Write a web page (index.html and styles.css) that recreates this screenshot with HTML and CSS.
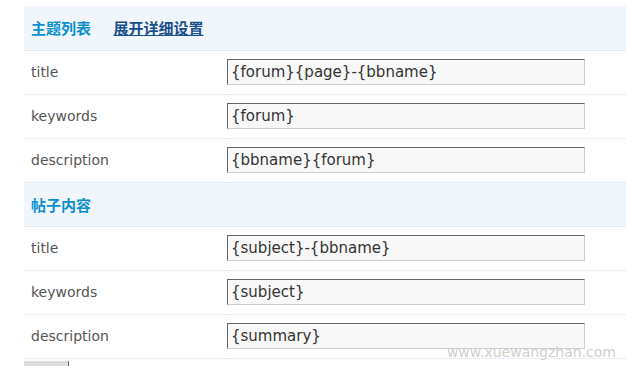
FILE: index.html
```html
<html>
    <head>
        <title>SEO设置</title>
        <link rel="stylesheet" href="styles.css">
    </head>
    <body>
        <div id="seo">
            <table class="tb">
                <tr class="hd">
                    <th colspan="2">
                        <span class="sub">主题列表</span>
                        <a href="#" class="more">展开详细设置</a>
                    </th>
                </tr>
                <tr>
                    <td class="lbl">title</td>
                    <td><input type="text" class="txt" value="{forum}{page}-{bbname}" /></td>
                </tr>
                <tr>
                    <td class="lbl">keywords</td>
                    <td><input type="text" class="txt" value="{forum}" /></td>
                </tr>
                <tr>
                    <td class="lbl">description</td>
                    <td><input type="text" class="txt" value="{bbname}{forum}" /></td>
                </tr>
                <tr class="hd">
                    <th colspan="2">
                        <span class="sub">帖子内容</span>
                    </th>
                </tr>
                <tr>
                    <td class="lbl">title</td>
                    <td><input type="text" class="txt" value="{subject}-{bbname}" /></td>
                </tr>
                <tr>
                    <td class="lbl">keywords</td>
                    <td><input type="text" class="txt" value="{subject}" /></td>
                </tr>
                <tr>
                    <td class="lbl">description</td>
                    <td><input type="text" class="txt" value="{summary}" /></td>
                </tr>
            </table>
            <div class="btnrow">
                <input type="button" class="btn" value="" />
            </div>
            <div class="mark">www.xuewangzhan.com</div>
        </div>
    </body>
</html>
```

FILE: styles.css
```css
body{
    margin: 0;
    background: #fff;
    font-family: "DejaVu Sans", Verdana, sans-serif;
}
#seo{
    position: relative;
    padding: 6px 0 0 24px;
    height: 360px;
    overflow: hidden;
}
.tb{
    width: 602px;
    border-collapse: collapse;
}
.tb td, .tb th{
    padding: 0;
    height: 44px;
    border-bottom: 1px dotted #cfe4f4;
}
.hd th{
    background: #f0f6fc;
    text-align: left;
    padding-left: 7px;
    font-family: "Noto Sans CJK SC", sans-serif;
    font-size: 15px;
    font-weight: bold;
    border-bottom: 1px solid #dfe8f1;
}
.sub{
    color: #0a90cf;
    margin-right: 19px;
}
.more{
    color: #1b4f8c;
    text-decoration: underline;
}
.lbl{
    width: 196px;
    padding-left: 7px !important;
    color: #555;
    font-size: 14px;
}
.txt{
    width: 358px;
    height: 26px;
    margin: 0;
    padding: 0 3px;
    background: #f8f8f8;
    border: 1px solid;
    border-color: #666 #ccc #ccc #666;
    font-family: "DejaVu Sans", Verdana, sans-serif;
    font-size: 15px;
    color: #333;
}
.btnrow{
    padding-top: 2px;
}
.btn{
    width: 45px;
    height: 24px;
    background: #ddd;
    border: none;
    border-right: 1px solid #666;
}
.mark{
    position: absolute;
    right: 10px;
    top: 344px;
    color: #d0d0d0;
    font-family: "DejaVu Sans", Verdana, sans-serif;
    font-size: 14px;
}
```
